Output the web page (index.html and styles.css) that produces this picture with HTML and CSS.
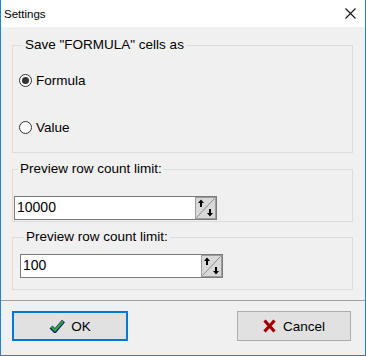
FILE: index.html
```html
<!DOCTYPE html>
<html lang="en">
<head>
    <meta charset="UTF-8">
    <title>Settings</title>
    <link rel="stylesheet" href="styles.css">
</head>
<body>
    <div class="window">
        <div class="titlebar">
            <span class="title">Settings</span>
            <span class="close">
                <svg width="11" height="11" viewBox="0 0 11 11">
                    <path d="M0.5 0.5 L10.5 10.5 M10.5 0.5 L0.5 10.5" stroke="#111" stroke-width="1.1" fill="none"/>
                </svg>
            </span>
        </div>

        <div class="content">
            <fieldset class="group group-save">
                <legend>Save "FORMULA" cells as</legend>
                <div class="radio-row"><span class="radio checked"></span>Formula</div>
                <div class="radio-row second"><span class="radio"></span>Value</div>
            </fieldset>

            <fieldset class="group group-limit">
                <legend>Preview row count limit:</legend>
                <div class="spin-edit">
                    <span class="value">10000</span>
                    <span class="spin-btn">
                        <svg width="21" height="22" viewBox="0 0 21 22">
                            <rect x="0.5" y="0.5" width="20" height="21" fill="#d9d9d9" stroke="#9c9c9c"/>
                            <path d="M1.5 20.5 L19.5 1.5" stroke="#8c8c8c" stroke-width="1"/>
                            <path d="M6 2.5 L9 6 L7 6 L7 10 L5 10 L5 6 L3 6 Z" fill="#000"/>
                            <path d="M15 19.5 L12 16 L14 16 L14 12 L16 12 L16 16 L18 16 Z" fill="#000"/>
                        </svg>
                    </span>
                </div>
            </fieldset>

            <fieldset class="group group-limit second">
                <legend>Preview row count limit:</legend>
                <div class="spin-edit">
                    <span class="value">100</span>
                    <span class="spin-btn">
                        <svg width="21" height="22" viewBox="0 0 21 22">
                            <rect x="0.5" y="0.5" width="20" height="21" fill="#d9d9d9" stroke="#9c9c9c"/>
                            <path d="M1.5 20.5 L19.5 1.5" stroke="#8c8c8c" stroke-width="1"/>
                            <path d="M6 2.5 L9 6 L7 6 L7 10 L5 10 L5 6 L3 6 Z" fill="#000"/>
                            <path d="M15 19.5 L12 16 L14 16 L14 12 L16 12 L16 16 L18 16 Z" fill="#000"/>
                        </svg>
                    </span>
                </div>
            </fieldset>
        </div>

        <div class="footer">
            <button class="btn btn-ok">
                <svg width="16" height="15" viewBox="0 0 16 15">
                    <path d="M2 8 L6 12 L14.5 2" stroke="#10207a" stroke-width="4" fill="none" stroke-linejoin="round"/>
                    <path d="M2.3 7.8 L6 11.3 L14 2.2" stroke="#2ea82e" stroke-width="2.2" fill="none"/>
                </svg>
                OK
            </button>
            <button class="btn btn-cancel">
                <svg width="13" height="14" viewBox="0 0 13 14">
                    <path d="M1.5 1.5 L11.5 12.5 M11.5 1.5 L1.5 12.5" stroke="#a40000" stroke-width="3.2" fill="none"/>
                </svg>
                Cancel
            </button>
        </div>
    </div>
</body>
</html>
```

FILE: styles.css
```css
* {
    margin: 0;
    padding: 0;
    box-sizing: border-box;
}

body {
    font-family: 'Liberation Sans', Arial, sans-serif;
    font-size: 13.5px;
    color: #000;
    background: #f0f0f0;
}

.window {
    width: 366px;
    height: 356px;
    border: 1px solid #1883d7;
    border-top: none;
    background: #f0f0f0;
    display: flex;
    flex-direction: column;
    overflow: hidden;
}

.titlebar {
    height: 27px;
    background: #fff;
    display: flex;
    align-items: center;
    justify-content: space-between;
    padding: 0 9px 0 3px;
}

.titlebar .title {
    font-size: 11.5px;
}

.titlebar .close {
    display: flex;
}

.content {
    flex: 1;
    padding: 10px 12px 10px 11px;
}

.group {
    border: 1px solid #dcdcdc;
    min-width: 0;
}

.group legend {
    line-height: 16px;
    margin-left: 4px;
    padding: 0 2px;
}

.group-save {
    padding: 17px 0 15px 6px;
}

.group-limit {
    margin-top: 8px;
    padding: 19px 0 1px 1px;
}

.group-limit.second {
    margin-top: 7px;
    padding: 9px 0 11px 7px;
}

.radio-row {
    height: 20px;
    display: flex;
    align-items: center;
    gap: 4px;
}

.radio-row.second {
    margin-top: 27px;
}

.radio {
    width: 13px;
    height: 13px;
    border: 1px solid #333;
    border-radius: 50%;
    background: #fff;
    display: flex;
    align-items: center;
    justify-content: center;
}

.radio.checked::after {
    content: "";
    width: 7px;
    height: 7px;
    border-radius: 50%;
    background: #333;
}

.spin-edit {
    width: 203px;
    height: 24px;
    background: #fff;
    border: 1px solid #7a7a7a;
    display: flex;
    align-items: center;
    justify-content: space-between;
}

.spin-edit .value {
    font-size: 14px;
    padding: 0 0 2px 2px;
}

.spin-btn {
    display: flex;
    align-self: flex-start;
}

.footer {
    height: 55px;
    border-top: 1px solid #a0a0a0;
    padding: 10px 14px 0 11px;
    display: flex;
    justify-content: space-between;
    align-items: flex-start;
}

.btn {
    height: 30px;
    background: #e1e1e1;
    border: 1px solid #adadad;
    font-family: inherit;
    font-size: 13.5px;
    color: #000;
    display: flex;
    align-items: center;
    justify-content: center;
    gap: 6px;
}

.btn-ok {
    width: 116px;
    border: 2px solid #0078d7;
}

.btn-cancel {
    width: 114px;
    gap: 7px;
}
```
